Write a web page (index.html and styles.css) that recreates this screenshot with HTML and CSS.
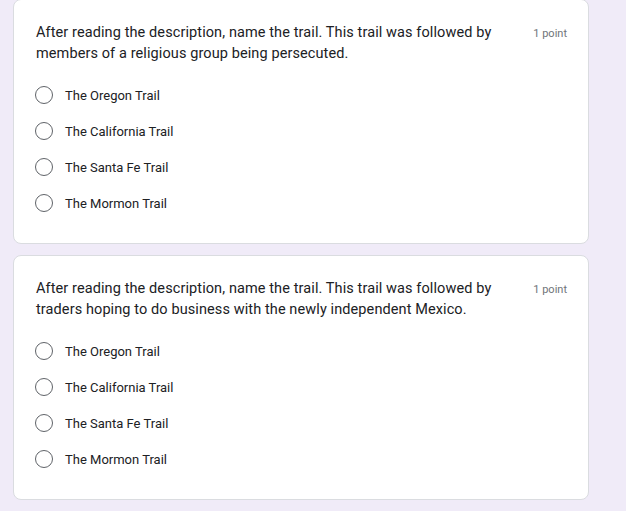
FILE: index.html
```html
<!DOCTYPE html>
<html lang="en">
<head>
<meta charset="utf-8">
<title>Quiz</title>
<link rel="stylesheet" href="styles.css">
</head>
<body>
<main class="form">
  <section class="card card-first">
    <div class="head">
      <div class="question">After reading the description, name the trail. This trail was followed by members of a religious group being persecuted.</div>
      <div class="points">1 point</div>
    </div>
    <ul class="options">
      <li class="option"><span class="radio"></span><span class="label">The Oregon Trail</span></li>
      <li class="option"><span class="radio"></span><span class="label">The California Trail</span></li>
      <li class="option"><span class="radio"></span><span class="label">The Santa Fe Trail</span></li>
      <li class="option"><span class="radio"></span><span class="label">The Mormon Trail</span></li>
    </ul>
  </section>
  <section class="card">
    <div class="head">
      <div class="question">After reading the description, name the trail. This trail was followed by traders hoping to do business with the newly independent Mexico.</div>
      <div class="points">1 point</div>
    </div>
    <ul class="options">
      <li class="option"><span class="radio"></span><span class="label">The Oregon Trail</span></li>
      <li class="option"><span class="radio"></span><span class="label">The California Trail</span></li>
      <li class="option"><span class="radio"></span><span class="label">The Santa Fe Trail</span></li>
      <li class="option"><span class="radio"></span><span class="label">The Mormon Trail</span></li>
    </ul>
  </section>
</main>
</body>
</html>
```

FILE: styles.css
```css
html, body {
  margin: 0;
  padding: 0;
}
body {
  background: #f0ebf8;
  font-family: Roboto, "Liberation Sans", Arial, sans-serif;
  color: #202124;
  width: 626px;
  height: 511px;
  overflow: hidden;
}
.form {
  display: flex;
  flex-direction: column;
  gap: 11px;
  padding-left: 13px;
  width: 576px;
}
.card {
  background: #fff;
  border: 1px solid #dadce0;
  border-radius: 8px;
  height: 245px;
  box-sizing: border-box;
  padding: 22px 22px 0 22px;
}
.card-first {
  margin-top: -1px;
}
.head {
  display: flex;
  justify-content: space-between;
  align-items: flex-start;
}
.question {
  width: 470px;
  font-size: 14.5px;
  line-height: 21px;
  letter-spacing: 0.1px;
  color: #202124;
}
.points {
  font-size: 11px;
  line-height: 21px;
  color: #70757a;
  padding-top: 1px;
  margin-right: -1px;
}
.options {
  list-style: none;
  margin: 13px 0 0 0;
  padding: 0;
}
.option {
  display: flex;
  align-items: center;
  height: 36px;
}
.radio {
  width: 18px;
  height: 18px;
  box-sizing: border-box;
  border: 1.5px solid #5f6368;
  border-radius: 50%;
  margin-left: -1px;
  margin-right: 12px;
  flex-shrink: 0;
}
.label {
  font-size: 13px;
  letter-spacing: 0;
  color: #202124;
}
```
